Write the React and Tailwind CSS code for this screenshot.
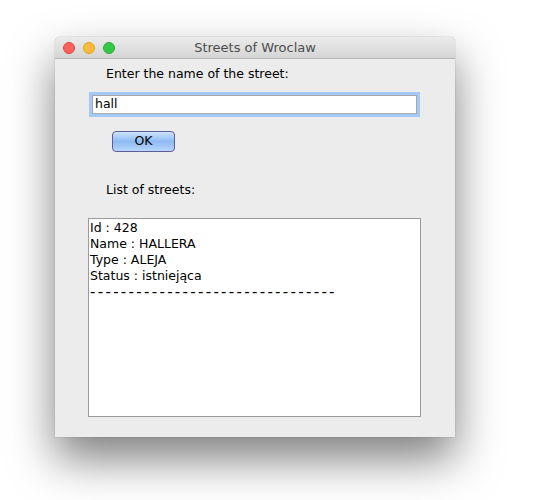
export default function App() {
  const lines = ["Id : 428", "Name : HALLERA", "Type : ALEJA", "Status : istniejąca"];

  return (
    <div className="min-h-[500px] w-[535px] bg-white pl-[55px] pt-[37px] font-['DejaVu_Sans',sans-serif] text-[13px] text-black">
      <div className="flex h-[400px] w-[400px] flex-col overflow-hidden rounded-t-[5px] bg-[#ececec] shadow-[0_22px_45px_rgba(0,0,0,0.5),0_0_1px_rgba(0,0,0,0.5)]">
        {/* title bar */}
        <div className="flex h-[22px] items-center border-b border-[#b5b5b5] bg-gradient-to-b from-[#ebebeb] to-[#d5d5d5] px-[8px]">
          <div className="flex gap-[8px]">
            <span className="h-[12px] w-[12px] rounded-full border border-[#e2463f] bg-[#fc605c]" />
            <span className="h-[12px] w-[12px] rounded-full border border-[#e1a116] bg-[#fdbc40]" />
            <span className="h-[12px] w-[12px] rounded-full border border-[#2dac2f] bg-[#34c84a]" />
          </div>
          <div className="flex-1 pr-[52px] text-center text-[13px] text-[#4d4d4d]">
            Streets of Wroclaw
          </div>
        </div>

        {/* content */}
        <div className="flex flex-col">
          <div className="ml-[51px] mt-[7px] h-[16px] leading-[16px] text-[12.5px]">
            Enter the name of the street:
          </div>
          <div className="ml-[37px] mt-[13px] flex h-[19px] w-[325px] items-center border border-[#a9a9a9] bg-white pl-[2px] text-[12.5px] outline-[3px] outline-solid outline-[#a4c9f6]">
            hall
          </div>
          <button className="ml-[57px] mt-[17px] flex h-[21px] w-[63px] items-center justify-center rounded-[4px] border border-[#5d5d9c] bg-gradient-to-b from-[#cde3fb] via-[#8ebaf4] to-[#b7d6fa] text-[12.5px] text-black">
            OK
          </button>
          <div className="ml-[51px] mt-[30px] h-[16px] leading-[16px] text-[12.5px]">
            List of streets:
          </div>
          <div className="ml-[33px] mt-[20px] h-[199px] w-[333px] border border-[#9a9a9a] bg-white pl-[1px] pt-[1px] text-[12.5px] leading-[16px]">
            {lines.map((l, i) => (
              <div key={i} className="whitespace-pre">
                {l}
              </div>
            ))}
            <div className="whitespace-pre text-[15px] tracking-[2.3px]">--------------------------------</div>
          </div>
        </div>
      </div>
    </div>
  );
}
